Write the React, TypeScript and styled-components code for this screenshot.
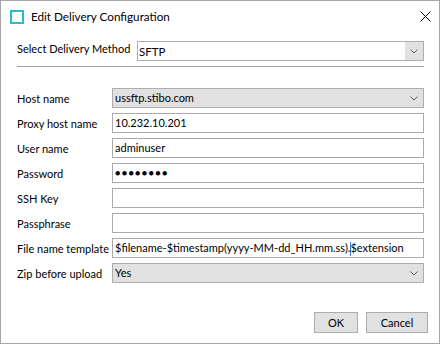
import styled, { createGlobalStyle } from "styled-components";

const GlobalStyle = createGlobalStyle`
  html, body {
    margin: 0;
    padding: 0;
    background: #ffffff;
  }
  * {
    box-sizing: border-box;
  }
`;

type Field = {
  label: string;
  value: string;
  kind: "combo" | "text";
  caretAt?: number;
};

const fields: Field[] = [
  { label: "Host name", value: "ussftp.stibo.com", kind: "combo" },
  { label: "Proxy host name", value: "10.232.10.201", kind: "text" },
  { label: "User name", value: "adminuser", kind: "text" },
  { label: "Password", value: "●●●●●●●●", kind: "text" },
  { label: "SSH Key", value: "", kind: "text" },
  { label: "Passphrase", value: "", kind: "text" },
  {
    label: "File name template",
    value: "$filename-$timestamp(yyyy-MM-dd_HH.mm.ss).$extension",
    kind: "text",
    caretAt: 42,
  },
  { label: "Zip before upload", value: "Yes", kind: "combo" },
];

const Chevron = () => (
  <svg width="8" height="5" viewBox="0 0 8 5">
    <polyline points="0.5,0.5 4,4 7.5,0.5" fill="none" stroke="#606060" strokeWidth="1" />
  </svg>
);

const App = () => {
  return (
    <>
      <GlobalStyle />
      <Window>
        <TitleBar>
          <AppIcon />
          <Title>Edit Delivery Configuration</Title>
          <CloseButton>
            <svg width="11" height="11" viewBox="0 0 11 11">
              <path d="M0.5 0.5 L10.5 10.5 M10.5 0.5 L0.5 10.5" stroke="#000" strokeWidth="1" />
            </svg>
          </CloseButton>
        </TitleBar>
        <Body>
          <MethodRow>
            <MethodLabel>Select Delivery Method</MethodLabel>
            <EditCombo>
              <EditValue>SFTP</EditValue>
              <DropButton>
                <Chevron />
              </DropButton>
            </EditCombo>
          </MethodRow>
          <Separator />
          <FormGrid>
            {fields.map((f) => (
              <FormRow key={f.label}>
                <Label>{f.label}</Label>
                <Input $combo={f.kind === "combo"} $dots={f.label === "Password"}>
                  <InputText>
                    {f.caretAt !== undefined ? (
                      <>
                        {f.value.slice(0, f.caretAt)}
                        <Caret />
                        {f.value.slice(f.caretAt)}
                      </>
                    ) : (
                      f.value
                    )}
                  </InputText>
                  {f.kind === "combo" && (
                    <ComboArrow>
                      <Chevron />
                    </ComboArrow>
                  )}
                </Input>
              </FormRow>
            ))}
          </FormGrid>
        </Body>
        <Footer>
          <Button $width={44}>OK</Button>
          <Button $width={62}>Cancel</Button>
        </Footer>
      </Window>
    </>
  );
};

const Window = styled.div`
  width: 440px;
  height: 344px;
  border: 1px solid #a6a6a6;
  background: #ffffff;
  display: flex;
  flex-direction: column;
  font-family: "Segoe UI", Lato, "Noto Sans", sans-serif;
  font-size: 11px;
  color: #000000;
`;

const TitleBar = styled.div`
  height: 31px;
  display: flex;
  align-items: center;
  padding-left: 9px;
`;

const AppIcon = styled.div`
  width: 14px;
  height: 14px;
  border: 2px solid #29bccb;
  margin-right: 7px;
`;

const Title = styled.span`
  font-size: 11.7px;
  line-height: 16px;
  margin-top: -2px;
`;

const CloseButton = styled.div`
  margin-left: auto;
  margin-right: 8px;
  width: 11px;
  height: 11px;
  display: flex;
`;

const Body = styled.div`
  flex: 1;
  padding: 9px 15px 0 16px;
  display: flex;
  flex-direction: column;
`;

const MethodRow = styled.div`
  display: grid;
  grid-template-columns: 120px 1fr;
  height: 20px;
`;

const MethodLabel = styled.span`
  white-space: nowrap;
  line-height: 14px;
  padding-top: 1px;
`;

const EditCombo = styled.div`
  display: flex;
  border: 1px solid #adadad;
  background: #ffffff;
`;

const EditValue = styled.span`
  flex: 1;
  padding: 1px 0 0 1px;
  line-height: 17px;
  font-size: 11.5px;
`;

const DropButton = styled.div`
  width: 18px;
  background: #e1e1e1;
  display: flex;
  align-items: center;
  justify-content: center;
`;

const Separator = styled.div`
  height: 1px;
  background: #a0a0a0;
  margin-top: 5px;
`;

const FormGrid = styled.div`
  margin-top: 21px;
  display: flex;
  flex-direction: column;
  gap: 5px;
`;

const FormRow = styled.div`
  display: grid;
  grid-template-columns: 95px 1fr;
  height: 20px;
`;

const Label = styled.span`
  white-space: nowrap;
  line-height: 18px;
  padding-top: 2px;
`;

const Input = styled.div<{ $combo: boolean; $dots: boolean }>`
  display: flex;
  align-items: center;
  border: 1px solid ${(p) => (p.$combo ? "#adadad" : "#ababab")};
  background: ${(p) => (p.$combo ? "#e1e1e1" : "#ffffff")};
  padding-left: 2px;
  font-size: ${(p) => (p.$dots ? "9px" : "11px")};
  letter-spacing: ${(p) => (p.$dots ? "1.3px" : "0")};
  white-space: nowrap;
  overflow: hidden;
`;

const InputText = styled.span`
  flex: 1;
  line-height: 18px;
`;

const Caret = styled.span`
  display: inline-block;
  width: 1px;
  height: 14px;
  background: #3c78d8;
  vertical-align: middle;
  margin-right: -1px;
`;

const ComboArrow = styled.div`
  width: 18px;
  display: flex;
  justify-content: center;
  align-items: center;
  padding-top: 1px;
`;

const Footer = styled.div`
  display: flex;
  justify-content: flex-end;
  gap: 8px;
  padding: 0 11px 10px 0;
`;

const Button = styled.div<{ $width: number }>`
  width: ${(p) => p.$width}px;
  height: 21px;
  border: 1px solid #adadad;
  background: #e1e1e1;
  display: flex;
  align-items: center;
  justify-content: center;
  line-height: 19px;
`;

export default App;
